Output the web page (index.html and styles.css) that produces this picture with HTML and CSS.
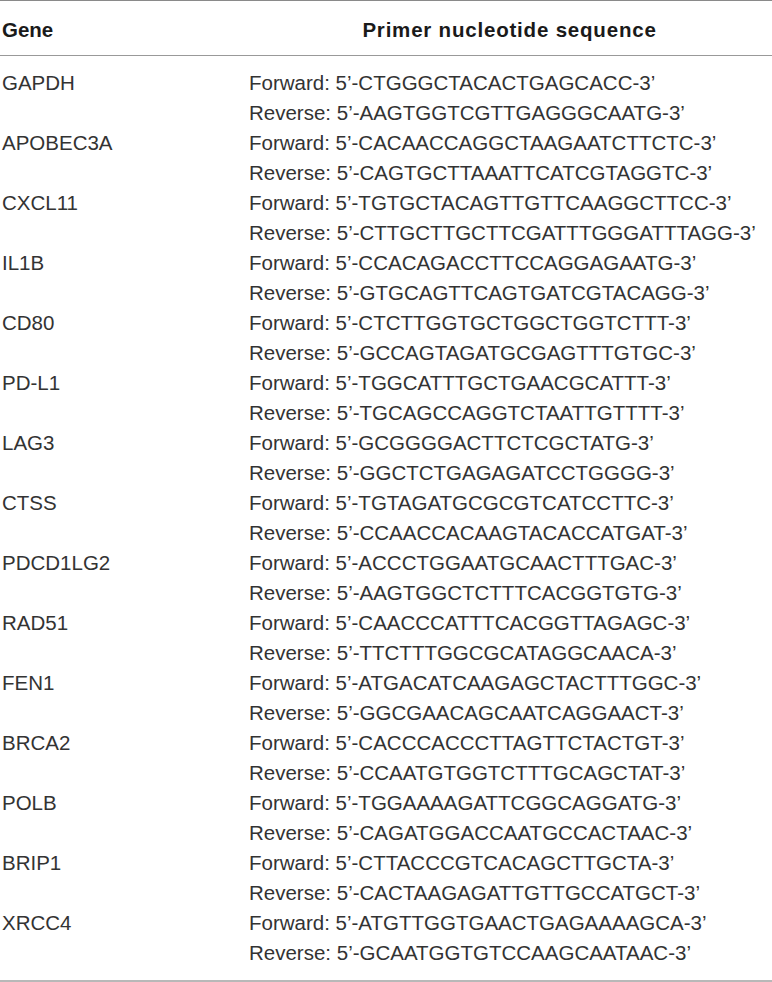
FILE: index.html
```html
<!DOCTYPE html>
<html lang="en">

<head>
    <meta charset="UTF-8" />
    <meta name="viewport" content="width=device-width, initial-scale=1.0" />
    <title>Primer sequences</title>
    <link rel="stylesheet" href="styles.css">
</head>

<body>
    <div class="primer-table">
        <div class="table-head">
            <div class="col-gene">Gene</div>
            <div class="col-seq">Primer nucleotide sequence</div>
        </div>
        <div class="table-body">
            <div class="row">
                <div class="col-gene">GAPDH</div>
                <div class="col-seq">
                    <div>Forward: 5’-CTGGGCTACACTGAGCACC-3’</div>
                    <div>Reverse: 5’-AAGTGGTCGTTGAGGGCAATG-3’</div>
                </div>
            </div>
            <div class="row">
                <div class="col-gene">APOBEC3A</div>
                <div class="col-seq">
                    <div>Forward: 5’-CACAACCAGGCTAAGAATCTTCTC-3’</div>
                    <div>Reverse: 5’-CAGTGCTTAAATTCATCGTAGGTC-3’</div>
                </div>
            </div>
            <div class="row">
                <div class="col-gene">CXCL11</div>
                <div class="col-seq">
                    <div>Forward: 5’-TGTGCTACAGTTGTTCAAGGCTTCC-3’</div>
                    <div>Reverse: 5’-CTTGCTTGCTTCGATTTGGGATTTAGG-3’</div>
                </div>
            </div>
            <div class="row">
                <div class="col-gene">IL1B</div>
                <div class="col-seq">
                    <div>Forward: 5’-CCACAGACCTTCCAGGAGAATG-3’</div>
                    <div>Reverse: 5’-GTGCAGTTCAGTGATCGTACAGG-3’</div>
                </div>
            </div>
            <div class="row">
                <div class="col-gene">CD80</div>
                <div class="col-seq">
                    <div>Forward: 5’-CTCTTGGTGCTGGCTGGTCTTT-3’</div>
                    <div>Reverse: 5’-GCCAGTAGATGCGAGTTTGTGC-3’</div>
                </div>
            </div>
            <div class="row">
                <div class="col-gene">PD-L1</div>
                <div class="col-seq">
                    <div>Forward: 5’-TGGCATTTGCTGAACGCATTT-3’</div>
                    <div>Reverse: 5’-TGCAGCCAGGTCTAATTGTTTT-3’</div>
                </div>
            </div>
            <div class="row">
                <div class="col-gene">LAG3</div>
                <div class="col-seq">
                    <div>Forward: 5’-GCGGGGACTTCTCGCTATG-3’</div>
                    <div>Reverse: 5’-GGCTCTGAGAGATCCTGGGG-3’</div>
                </div>
            </div>
            <div class="row">
                <div class="col-gene">CTSS</div>
                <div class="col-seq">
                    <div>Forward: 5’-TGTAGATGCGCGTCATCCTTC-3’</div>
                    <div>Reverse: 5’-CCAACCACAAGTACACCATGAT-3’</div>
                </div>
            </div>
            <div class="row">
                <div class="col-gene">PDCD1LG2</div>
                <div class="col-seq">
                    <div>Forward: 5’-ACCCTGGAATGCAACTTTGAC-3’</div>
                    <div>Reverse: 5’-AAGTGGCTCTTTCACGGTGTG-3’</div>
                </div>
            </div>
            <div class="row">
                <div class="col-gene">RAD51</div>
                <div class="col-seq">
                    <div>Forward: 5’-CAACCCATTTCACGGTTAGAGC-3’</div>
                    <div>Reverse: 5’-TTCTTTGGCGCATAGGCAACA-3’</div>
                </div>
            </div>
            <div class="row">
                <div class="col-gene">FEN1</div>
                <div class="col-seq">
                    <div>Forward: 5’-ATGACATCAAGAGCTACTTTGGC-3’</div>
                    <div>Reverse: 5’-GGCGAACAGCAATCAGGAACT-3’</div>
                </div>
            </div>
            <div class="row">
                <div class="col-gene">BRCA2</div>
                <div class="col-seq">
                    <div>Forward: 5’-CACCCACCCTTAGTTCTACTGT-3’</div>
                    <div>Reverse: 5’-CCAATGTGGTCTTTGCAGCTAT-3’</div>
                </div>
            </div>
            <div class="row">
                <div class="col-gene">POLB</div>
                <div class="col-seq">
                    <div>Forward: 5’-TGGAAAAGATTCGGCAGGATG-3’</div>
                    <div>Reverse: 5’-CAGATGGACCAATGCCACTAAC-3’</div>
                </div>
            </div>
            <div class="row">
                <div class="col-gene">BRIP1</div>
                <div class="col-seq">
                    <div>Forward: 5’-CTTACCCGTCACAGCTTGCTA-3’</div>
                    <div>Reverse: 5’-CACTAAGAGATTGTTGCCATGCT-3’</div>
                </div>
            </div>
            <div class="row">
                <div class="col-gene">XRCC4</div>
                <div class="col-seq">
                    <div>Forward: 5’-ATGTTGGTGAACTGAGAAAAGCA-3’</div>
                    <div>Reverse: 5’-GCAATGGTGTCCAAGCAATAAC-3’</div>
                </div>
            </div>
        </div>
    </div>
</body>

</html>
```

FILE: styles.css
```css
* {
    margin: 0;
    padding: 0;
    box-sizing: border-box;
}

body {
    background: #fff;
    color: #333;
    font-family: 'Liberation Sans', Arial, sans-serif;
    font-size: 20.5px;
    line-height: 30px;
}

.primer-table {
    width: 772px;
    border-top: 1px solid #8a8a8a;
    border-bottom: 2px solid #b8b8b8;
}

.table-head,
.row {
    display: grid;
    grid-template-columns: 247px 1fr;
}

.table-head {
    padding: 13.5px 2px 10px;
    border-bottom: 1px solid #999;
    font-weight: bold;
    color: #1a1a1a;
}

.table-head .col-seq {
    text-align: center;
    letter-spacing: 0.8px;
}

.table-body {
    padding: 12.5px 2px 11.5px;
}

.col-seq {
    white-space: nowrap;
}
```
